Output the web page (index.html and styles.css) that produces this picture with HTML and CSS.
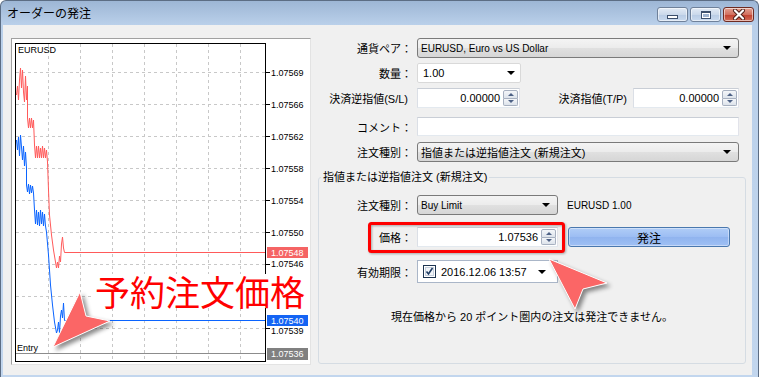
FILE: index.html
```html
<!DOCTYPE html>
<html lang="ja">
<head>
  <meta charset="UTF-8">
  <meta name="viewport" content="width=device-width, initial-scale=1.0">
  <title>オーダーの発注</title>
  <link rel="stylesheet" href="styles.css">
</head>
<body>
  <div class="window">
    <div class="titlebar">
      <span class="title">オーダーの発注</span>
      <div class="caption">
        <span class="cap-btn"><span class="ico-min"></span></span>
        <span class="cap-btn"><span class="ico-max"></span></span>
        <span class="cap-btn close">
          <svg width="14" height="11" viewBox="0 0 14 11">
            <path d="M3 1.5L11 9.5M11 1.5L3 9.5" stroke="#4a1d17" stroke-width="4" stroke-linecap="round"/>
            <path d="M3 1.5L11 9.5M11 1.5L3 9.5" stroke="#fff" stroke-width="2.2" stroke-linecap="round"/>
          </svg>
        </span>
      </div>
    </div>

    <div class="client">
      <div class="chart">
        <svg width="298" height="325" viewBox="12 39 298 325">
          <g stroke="#c8c8c8" stroke-dasharray="3 3" fill="none">
            <path d="M48.5 44V361M80.5 44V361M112.5 44V361M144.5 44V361M176.5 44V361M208.5 44V361M240.5 44V361"/>
            <path d="M16 72.5H265M16 104.5H265M16 136.5H265M16 168.5H265M16 200.5H265M16 232.5H265M16 264.5H265M16 296.5H265M16 328.5H265"/>
          </g>
          <rect x="15.5" y="43.5" width="250" height="318" fill="none" stroke="#000"/>
          <path stroke="#000" d="M266 72.5h4M266 104.5h4M266 136.5h4M266 168.5h4M266 200.5h4M266 232.5h4M266 264.5h4M266 296.5h4M266 328.5h4"/>
          <g class="axis">
            <text x="18" y="53">EURUSD</text>
            <text x="271" y="76">1.07569</text>
            <text x="271" y="108">1.07566</text>
            <text x="271" y="140">1.07562</text>
            <text x="271" y="172">1.07558</text>
            <text x="271" y="204">1.07554</text>
            <text x="271" y="236">1.07550</text>
            <text x="271" y="267">1.07546</text>
            <text x="271" y="334">1.07539</text>
            <text x="17" y="351">Entry</text>
          </g>
          <polyline fill="none" stroke="#ff5a5a" points="16.5,95 17.5,86 18.5,100 19.5,80 20.5,68 21.5,88 22.5,70 23.5,92 24.5,102 25.5,76 26.5,100 27.5,86 27.5,118 28.5,128 29.5,118 30.5,128 31.5,118 32.5,128 33.5,120 34.5,145 35.5,158 36.5,146 37.5,158 38.5,146 39.5,158 40.5,148 41.5,158 42.5,146 43.5,158 44.5,148 45.5,158 46.5,150 47.5,162 48.5,190 49.5,215 51.5,235 53.5,250 55.5,262 56.5,268 57.5,262 58.5,268 59.5,256 60.5,262 61.5,244 62.5,237 63.5,248 64.5,252.5 265,252.5"/>
          <polyline fill="none" stroke="#0a64ff" points="16.5,140 17.5,150 18.5,137 19.5,156 20.5,135 21.5,147 22.5,160 23.5,146 24.5,166 25.5,152 26.5,168 26.5,185 27.5,192 28.5,184 29.5,194 30.5,185 31.5,193 32.5,186 33.5,193 34.5,210 35.5,224 36.5,210 37.5,225 38.5,212 39.5,226 40.5,210 41.5,224 42.5,212 43.5,226 44.5,214 45.5,226 46.5,232 48.5,255 50.5,285 52.5,305 54.5,322 56.5,333 57.5,330 58.5,322 59.5,333 60.5,316 61.5,310 62.5,318 63.5,303 64.5,320.5 265,320.5"/>
          <path stroke="#8c8c8c" d="M16 353.5H265"/>
          <rect x="267" y="247" width="41" height="11" fill="#f56464"/>
          <rect x="267" y="315" width="41" height="11" fill="#1464f4"/>
          <rect x="267" y="348" width="41" height="12" fill="#808080"/>
          <g class="axis tag">
            <text x="271" y="256">1.07548</text>
            <text x="271" y="324">1.07540</text>
            <text x="271" y="357">1.07536</text>
          </g>
        </svg>
      </div>

      <div class="order-form">
        <div class="row">
          <span class="lbl">通貨ペア：</span>
          <div class="combo wide"><span class="latin">EURUSD, Euro vs US Dollar</span><i class="drop"></i></div>
        </div>
        <div class="row">
          <span class="lbl">数量：</span>
          <div class="edit-combo"><span>1.00</span><i class="drop"></i></div>
        </div>
        <div class="row">
          <span class="lbl sl-lbl">決済逆指値(S/L)</span>
          <div class="spin sl">
            <span class="val">0.00000</span>
            <span class="spin-btns"><b class="up"></b><b class="down"></b></span>
          </div>
          <span class="lbl-tp">決済指値(T/P)</span>
          <div class="spin tp">
            <span class="val">0.00000</span>
            <span class="spin-btns"><b class="up"></b><b class="down"></b></span>
          </div>
        </div>
        <div class="row comment">
          <span class="lbl">コメント：</span>
          <div class="textbox wide"></div>
        </div>
        <div class="row type">
          <span class="lbl">注文種別：</span>
          <div class="combo wide"><span>指値または逆指値注文 (新規注文)</span><i class="drop"></i></div>
        </div>

        <fieldset class="group">
          <legend>指値または逆指値注文 (新規注文)</legend>
          <div class="row">
            <span class="lbl">注文種別：</span>
            <div class="combo narrow"><span class="latin">Buy Limit</span><i class="drop"></i></div>
            <span class="latin symbol">EURUSD 1.00</span>
          </div>
          <div class="row price">
            <span class="lbl">価格：</span>
            <div class="spin narrow">
              <span class="val">1.07536</span>
              <span class="spin-btns"><b class="up"></b><b class="down"></b></span>
            </div>
            <button class="send">発注</button>
          </div>
          <div class="row expiry">
            <span class="lbl">有効期限：</span>
            <div class="datetime narrow">
              <svg class="check" width="13" height="13" viewBox="0 0 13 13">
                <rect x="0.5" y="0.5" width="12" height="12" fill="#fff" stroke="#1d3450"/>
                <rect x="2.5" y="2.5" width="8" height="8" fill="#f1f4f8" stroke="#c5cfdc"/>
                <path d="M3.5 6.5L5.5 9L9.5 3" fill="none" stroke="#1f3c63" stroke-width="1.6"/>
              </svg>
              <span class="date">2016.12.06 13:57</span>
              <i class="drop"></i>
            </div>
          </div>
          <p class="notice">現在価格から 20 ポイント圏内の注文は発注できません。</p>
        </fieldset>
      </div>
    </div>

    <div class="callout">予約注文価格</div>
    <svg class="marks" width="759" height="377" viewBox="0 0 759 377">
      <rect class="hl" x="369.5" y="223.5" width="194" height="28" rx="2" fill="none" stroke="#ff0000" stroke-width="3"/>
      <polygon class="arrow" points="53,347 80,292 86,316 110,321"/>
      <polygon class="arrow" points="549,259 607,283 583,289 575,309"/>
    </svg>
  </div>
</body>
</html>
```

FILE: styles.css
```css
body {
  margin: 0;
  background: #fff;
  font-family: "Liberation Sans", "Noto Sans CJK JP", sans-serif;
  font-size: 11px;
  color: #000;
}

.window {
  position: relative;
  width: 759px;
  height: 377px;
  box-sizing: border-box;
  border: 1px solid #5c6d84;
  border-bottom: none;
  border-radius: 6px 6px 0 0;
  background: linear-gradient(#9db6d5 0, #bad0ea 24px, #c2d6ee 100%);
  display: flex;
  flex-direction: column;
  overflow: hidden;
}

/* title bar */
.titlebar {
  height: 24px;
  flex-shrink: 0;
  display: flex;
  justify-content: space-between;
  align-items: flex-start;
}
.title {
  padding: 5px 0 0 6px;
  font-size: 12px;
  line-height: 16px;
}
.caption {
  display: flex;
  gap: 2px;
  margin: 6px 4px 0 0;
}
.cap-btn {
  width: 31px;
  height: 15px;
  box-sizing: border-box;
  border: 1px solid #6f819a;
  border-radius: 3px;
  background: linear-gradient(#e3ebf5, #cbd9eb 50%, #b8cbe4 51%, #c9daef);
  box-shadow: inset 0 0 0 1px rgba(255, 255, 255, 0.55);
  display: flex;
  align-items: center;
  justify-content: center;
}
.cap-btn.close {
  border-color: #6e2b22;
  background: linear-gradient(#e4a293, #d2705f 50%, #c13f2d 51%, #d26c57);
}
.ico-min {
  width: 11px;
  height: 4px;
  margin-top: 4px;
  box-sizing: border-box;
  border: 1px solid #3b4e6b;
  background: #fff;
}
.ico-max {
  width: 10px;
  height: 8px;
  box-sizing: border-box;
  border: 1px solid #3b4e6b;
  border-top-width: 2px;
  background: #fff;
  box-shadow: inset 0 0 0 1px #fff, inset 0 0 0 3px #9fb3cf;
}

/* client area */
.client {
  flex: 1;
  margin: 0 6px 2px 2px;
  padding: 13px 0 0 8px;
  background: #f0f0f0;
  display: flex;
  align-items: flex-start;
}

.chart {
  width: 300px;
  height: 327px;
  flex-shrink: 0;
  box-sizing: border-box;
  border: 1px solid;
  border-color: #a0a0a0 #e3e3e3 #e3e3e3 #a0a0a0;
  background: #fff;
}
.chart svg {
  display: block;
}
.axis {
  font-family: "Liberation Sans", sans-serif;
  font-size: 9px;
  fill: #000;
}
.axis.tag {
  fill: #fff;
}

/* order form */
.order-form {
  flex: 1;
  align-self: stretch;
  margin-left: 7px;
  padding: 0 6px 11px 0;
  display: flex;
  flex-direction: column;
}
.order-form > .row {
  margin-right: 7px;
}
.row {
  display: flex;
  align-items: center;
  height: 20px;
  flex-shrink: 0;
}
.row + .row {
  margin-top: 5px;
}
.row.comment {
  height: 19px;
  margin-top: 9px;
}
.row.type {
  margin-top: 6px;
}
.lbl {
  width: 94px;
  flex-shrink: 0;
  margin-right: 5px;
  text-align: right;
  white-space: nowrap;
}
.sl-lbl {
  width: 90px;
  margin-right: 9px;
}
.latin {
  font-size: 10px;
}

.combo {
  height: 20px;
  box-sizing: border-box;
  border: 1px solid #7a7a7a;
  border-radius: 3px;
  background: linear-gradient(#f4f4f4, #ececec 48%, #e0e0e0 52%, #d6d6d6);
  display: flex;
  align-items: center;
  justify-content: space-between;
  padding: 0 7px 0 3px;
}
.wide {
  width: 322px;
}
.narrow {
  width: 141px;
}
.drop {
  width: 0;
  height: 0;
  border-left: 4px solid transparent;
  border-right: 4px solid transparent;
  border-top: 4px solid #000;
}

.edit-combo {
  width: 104px;
  height: 20px;
  box-sizing: border-box;
  border: 1px solid #d9d9d9;
  border-radius: 2px;
  background: #fff;
  display: flex;
  align-items: center;
  justify-content: space-between;
  padding: 0 5px 0 5px;
}

.textbox {
  height: 19px;
  box-sizing: border-box;
  border: 1px solid;
  border-color: #c9ced6 #e2e3ea #e3e9ef #dbdfe6;
  background: #fff;
}

.spin {
  height: 20px;
  box-sizing: border-box;
  border: 1px solid;
  border-color: #c9ced6 #e2e3ea #e3e9ef #dbdfe6;
  background: #fff;
  display: flex;
  align-items: center;
  justify-content: flex-end;
  padding-right: 1px;
}
.spin.sl {
  width: 103px;
}
.spin.tp {
  width: 106px;
}
.spin .val {
  margin-right: 3px;
}
.spin-btns {
  width: 15px;
  height: 16px;
  display: flex;
  flex-direction: column;
}
.spin-btns b {
  flex: 1;
  box-sizing: border-box;
  border: 1px solid #a7b0c0;
  background: linear-gradient(#f4f6f9, #dde3eb);
  display: flex;
  align-items: center;
  justify-content: center;
}
.spin-btns b.up {
  border-radius: 2px 2px 0 0;
}
.spin-btns b.down {
  border-top: none;
  border-radius: 0 0 2px 2px;
}
.spin-btns b::after {
  content: "";
  border-left: 3px solid transparent;
  border-right: 3px solid transparent;
}
.spin-btns b.up::after {
  border-bottom: 3px solid #4d6185;
}
.spin-btns b.down::after {
  border-top: 3px solid #4d6185;
}
.lbl-tp {
  flex: 1;
  text-align: right;
  padding-right: 6px;
  white-space: nowrap;
}

/* group box */
.group {
  flex: 1;
  margin: 8px 0 0;
  padding: 10px 0 0;
  border: 1px solid #d5dce3;
  border-radius: 3px;
  min-width: 0;
}
.group legend {
  margin-left: 2px;
  padding: 0 2px;
  line-height: 15px;
}
.group .lbl {
  width: 93px;
}
.symbol {
  margin-left: 9px;
}
.row.price {
  margin-top: 12px;
}
.send {
  width: 162px;
  height: 20px;
  margin-left: 10px;
  border: 1px solid #4a78ae;
  border-radius: 3px;
  background: linear-gradient(#b0cdf7, #9cbdf3 50%, #90b4ef 51%, #9fc0f4);
  box-shadow: inset 0 0 0 1px rgba(255, 255, 255, 0.4);
  font-family: "Noto Sans CJK JP", sans-serif;
  font-size: 12px;
  padding: 0;
  color: #000;
}
.row.expiry {
  height: 23px;
  margin-top: 13px;
}
.datetime {
  height: 23px;
  box-sizing: border-box;
  border: 1px solid #aab6c8;
  background: #fff;
  display: flex;
  align-items: center;
  padding: 0 11px 0 5px;
}
.datetime .date {
  flex: 1;
  margin-left: 5px;
}
.check {
  display: block;
  flex-shrink: 0;
}
.notice {
  margin: 28px 0 0;
  line-height: 13px;
  text-align: center;
}

/* annotations over the screenshot */
.callout {
  position: absolute;
  left: 92px;
  top: 273px;
  padding: 0 2px;
  background: #fff;
  color: #ff0000;
  font-family: "Noto Sans CJK JP", sans-serif;
  font-size: 35px;
  line-height: 34px;
}
.marks {
  position: absolute;
  left: -1px;
  top: -1px;
  pointer-events: none;
}
.marks .hl {
  filter: drop-shadow(1px 1px 1px rgba(0, 0, 0, 0.3));
}
.marks .arrow {
  fill: #fb6666;
  stroke: #fff;
  stroke-width: 1;
  stroke-linejoin: round;
  filter: drop-shadow(3px 3px 2px rgba(0, 0, 0, 0.45));
}
```
